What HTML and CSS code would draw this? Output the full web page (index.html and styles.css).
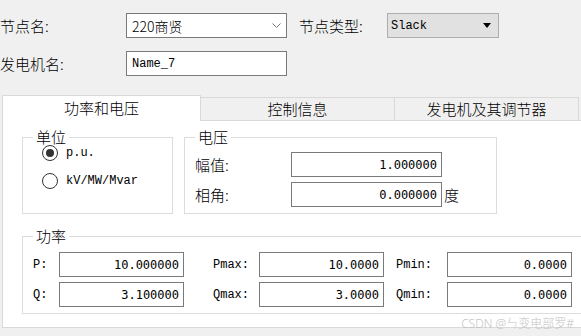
FILE: index.html
```html
<!DOCTYPE html>
<html lang="zh-CN">

<head>
    <meta charset="UTF-8">
    <title>发电机参数</title>
    <link rel="stylesheet" href="styles.css">
</head>

<body>

    <!-- 节点 / 发电机 基本信息 -->
    <div class="header">
        <div class="row">
            <label class="lbl lbl-main">节点名:</label>
            <div class="combo">
                <span class="combo-text">220商贤</span>
                <svg class="chevron" width="9" height="6" viewBox="0 0 9 6">
                    <polyline points="0.5,0.5 4.5,4.5 8.5,0.5" fill="none" stroke="#777" stroke-width="1" />
                </svg>
            </div>
            <label class="lbl lbl-type">节点类型:</label>
            <div class="combo combo-gray">
                <span class="mono">Slack</span>
                <svg class="arrow" width="8" height="5" viewBox="0 0 8 5">
                    <polygon points="0,0 8,0 4,5" fill="#000" />
                </svg>
            </div>
        </div>
        <div class="row">
            <label class="lbl lbl-main">发电机名:</label>
            <input class="text mono name-box" value="Name_7" />
        </div>
    </div>

    <!-- 选项卡 -->
    <div class="tabs">
        <div class="tab active">功率和电压</div>
        <div class="tab tab-2">控制信息</div>
        <div class="tab tab-3">发电机及其调节器</div>
    </div>

    <div class="panel">
        <div class="upper">
            <fieldset class="group unit-group">
                <legend>单位</legend>
                <div class="radio-row">
                    <span class="radio checked"></span>
                    <span class="mono">p.u.</span>
                </div>
                <div class="radio-row">
                    <span class="radio"></span>
                    <span class="mono">kV/MW/Mvar</span>
                </div>
            </fieldset>

            <fieldset class="group volt-group">
                <legend>电压</legend>
                <div class="field-row">
                    <label class="lbl volt-lbl">幅值:</label>
                    <input class="text num volt-box" value="1.000000" />
                </div>
                <div class="field-row">
                    <label class="lbl volt-lbl">相角:</label>
                    <input class="text num volt-box" value="0.000000" />
                    <span class="lbl unit">度</span>
                </div>
            </fieldset>
        </div>

        <fieldset class="group power-group">
            <legend>功率</legend>
            <div class="power-grid">
                <label class="mono plbl">P:</label>
                <input class="text num" value="10.000000" />
                <label class="mono plbl gap-a">Pmax:</label>
                <input class="text num" value="10.0000" />
                <label class="mono plbl gap-b">Pmin:</label>
                <input class="text num" value="0.0000" />

                <label class="mono plbl">Q:</label>
                <input class="text num" value="3.100000" />
                <label class="mono plbl gap-a">Qmax:</label>
                <input class="text num" value="3.0000" />
                <label class="mono plbl gap-b">Qmin:</label>
                <input class="text num" value="0.0000" />
            </div>
        </fieldset>
    </div>

    <div class="watermark">CSDN @ㄣ变电部罗#</div>

</body>

</html>
```

FILE: styles.css
```css
* {
    box-sizing: border-box;
}

body {
    margin: 0;
    width: 581px;
    height: 336px;
    overflow: hidden;
    background-color: #f0f0f0;
    font-family: 'Noto Sans CJK SC', 'Microsoft YaHei', sans-serif;
    font-size: 15px;
    font-weight: 300;
    color: #000;
    position: relative;
}

.mono {
    font-family: 'Liberation Mono', 'Noto Sans CJK SC', monospace;
    font-size: 12px;
    font-weight: 400;
}

/* header rows */
.header {
    padding-top: 13px;
    display: flex;
    flex-direction: column;
    gap: 13px;
}

.row {
    display: flex;
    align-items: center;
    height: 25px;
}

.lbl {
    line-height: 20px;
    white-space: nowrap;
}

.lbl-main {
    width: 126px;
}

.lbl-type {
    width: 88px;
    margin-left: 12px;
}

.combo {
    width: 161px;
    height: 25px;
    border: 1px solid #7a7a7a;
    background: #fff;
    display: flex;
    align-items: center;
    justify-content: space-between;
    padding: 0 5px 0 5px;
}

.combo-text {
    font-size: 14px;
}

.combo-gray {
    width: 112px;
    background: #e1e1e1;
    border-color: #adadad;
    padding: 0 7px 0 3px;
}

.text {
    height: 25px;
    border: 1px solid #7a7a7a;
    background: #fff;
    margin: 0;
    outline: none;
    color: #000;
}

.name-box {
    width: 161px;
    padding: 0 5px;
}

.num {
    font-family: 'DejaVu Sans Mono', monospace;
    font-size: 12px;
    text-align: right;
    padding: 0 4px 0 2px;
    width: 125px;
}

/* tabs */
.tabs {
    display: flex;
    align-items: flex-end;
    margin: 19px 0 0 2px;
    height: 25px;
}

.tab {
    height: 23px;
    border: 1px solid #d9d9d9;
    border-bottom: none;
    text-align: center;
    line-height: 21px;
}

.tab.active {
    width: 199px;
    height: 26px;
    line-height: 24px;
    background: #fff;
    margin-bottom: -1px;
    position: relative;
    z-index: 1;
}

.tab-2 {
    width: 194px;
    border-left: none;
}

.tab-3 {
    width: 184px;
    border-left: none;
}

.panel {
    margin-left: 2px;
    width: 600px;
    height: 208px;
    background: #fff;
    border: 1px solid #d9d9d9;
    padding: 9px 0 0 19px;
}

.upper {
    display: flex;
    gap: 11px;
}

/* group boxes */
.group {
    margin: 0;
    min-width: 0;
    border: 1px solid #dcdcdc;
    padding: 0 10px;
}

.group legend {
    padding: 0 3px;
    line-height: 14px;
    font-size: 15px;
}

.unit-group {
    width: 151px;
    height: 84px;
}

.radio-row {
    display: flex;
    align-items: center;
    height: 18px;
    margin-left: 9px;
    gap: 8px;
}

.radio-row + .radio-row {
    margin-top: 10px;
}

.radio {
    width: 16px;
    height: 16px;
    border: 1px solid #333;
    border-radius: 50%;
    display: flex;
    align-items: center;
    justify-content: center;
}

.radio.checked::after {
    content: "";
    width: 8px;
    height: 8px;
    border-radius: 50%;
    background: #333;
}

.volt-group {
    width: 313px;
    height: 84px;
    padding-top: 8px;
}

.field-row {
    display: flex;
    align-items: center;
    height: 25px;
}

.field-row + .field-row {
    margin-top: 5px;
}

.volt-lbl {
    width: 96px;
}

.volt-box {
    width: 151px;
}

.unit {
    margin-left: 2px;
}

.power-group {
    width: 560px;
    margin-top: 15px;
    padding: 9px 10px 6px;
}

.power-grid {
    display: grid;
    grid-template-columns: 26px 125px 75px 125px 63px 125px;
    row-gap: 5px;
    align-items: center;
}

.power-grid .text {
    width: 125px;
}

.plbl {
    white-space: nowrap;
}

.gap-a {
    padding-left: 29px;
}

.gap-b {
    padding-left: 12px;
}

.watermark {
    position: absolute;
    right: 7px;
    bottom: 4px;
    color: #c4c4c4;
    font-size: 12px;
    font-family: 'Noto Sans', 'Noto Sans CJK SC', sans-serif;
}
```
